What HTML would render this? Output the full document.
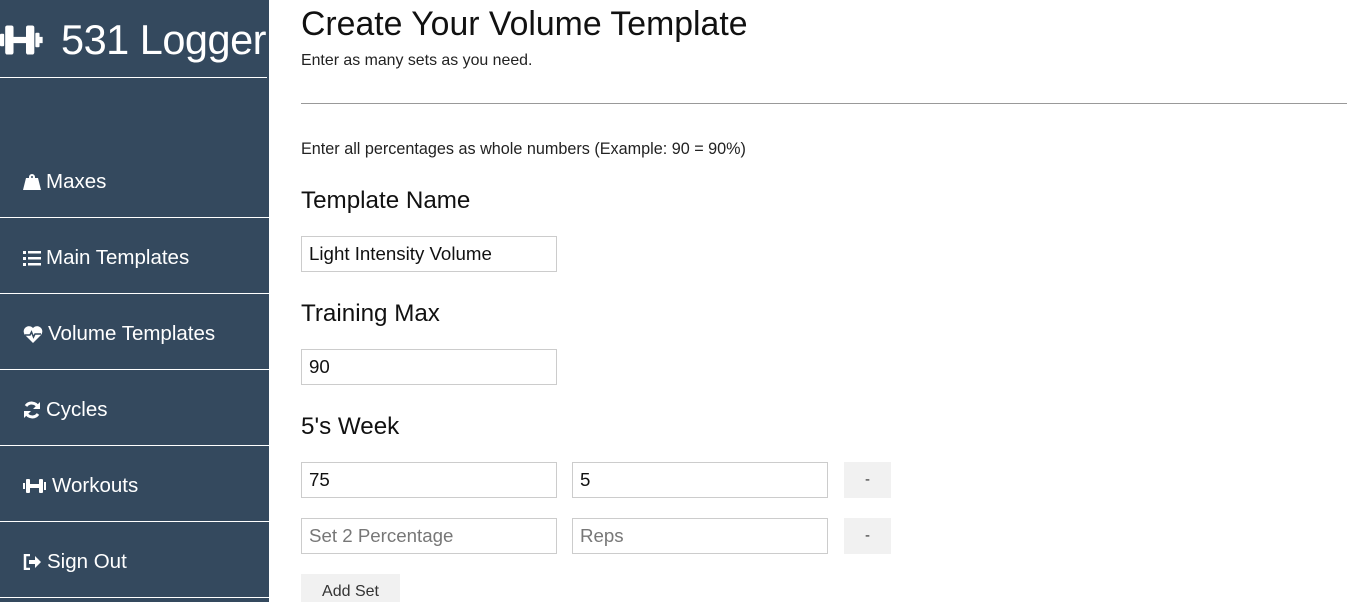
<!DOCTYPE html>
<html><head><style>
*{box-sizing:border-box;margin:0;padding:0}
body{width:1347px;height:602px;overflow:hidden;background:#fff;font-family:"Liberation Sans",sans-serif;position:relative}
.sb{position:absolute;left:0;top:0;width:269px;height:602px;background:#34495e;color:#fff}
.logo{position:absolute;left:0;top:16px;font-size:41.5px;white-space:nowrap;letter-spacing:-0.5px;display:flex;align-items:center}
.hr{position:absolute;left:0;height:1px;background:#fff;width:269px}
.nav{position:absolute;left:23px;font-size:20.5px;display:flex;align-items:center;gap:5px}
.abs{position:absolute}
.inp{position:absolute;height:36px;border:1px solid #ccc;font-size:18.7px;padding:0 7px;line-height:34px;color:#111}
.ph{color:#777}
.btn{position:absolute;background:#f1f1f1;font-size:15px;color:#333;text-align:center}
h2{position:absolute;font-weight:normal;font-size:24.2px;color:#111;left:301px}
</style></head><body>
<div class="sb">
 <div class="logo"><svg width="52" height="40" viewBox="0 0 50 38"><rect x="0" y="13" width="4" height="12" rx="1" fill="#fff"/><rect x="5" y="5" width="8" height="28" rx="2" fill="#fff"/><rect x="13" y="16" width="12" height="6" fill="#fff"/><rect x="25" y="5" width="8" height="28" rx="2" fill="#fff"/><rect x="34" y="12" width="4" height="14" rx="1" fill="#fff"/><rect x="38" y="16" width="3" height="6" fill="#fff"/></svg><span style="margin-left:9px">531 Logger</span></div>
 <div class="hr" style="top:77px;width:267px"></div>
 <div class="nav" style="top:170px"><svg width="18" height="18" viewBox="0 0 18 18"><path d="M9 1a3 3 0 0 1 3 3v1h3l3 12H0L3 5h3V4a3 3 0 0 1 3-3zm0 2a1 1 0 1 0 0 2 1 1 0 0 0 0-2z" fill="#fff"/></svg>Maxes</div>
 <div class="hr" style="top:217px"></div>
 <div class="nav" style="top:246px"><svg width="18" height="16" viewBox="0 0 18 16"><g fill="#fff"><rect x="0" y="1" width="3" height="3"/><rect x="0" y="7" width="3" height="3"/><rect x="0" y="13" width="3" height="3"/><rect x="5" y="1" width="13" height="2.5"/><rect x="5" y="7" width="13" height="2.5"/><rect x="5" y="13" width="13" height="2.5"/></g></svg>Main Templates</div>
 <div class="hr" style="top:293px"></div>
 <div class="nav" style="top:322px"><svg width="20" height="17" viewBox="0 0 20 17"><path d="M10 17L2 9A5 5 0 0 1 10 2a5 5 0 0 1 8 7z" fill="#fff"/><path d="M2 9h5l1.5-3 2 5 1.5-3h6" stroke="#34495e" stroke-width="1.5" fill="none"/></svg>Volume Templates</div>
 <div class="hr" style="top:369px"></div>
 <div class="nav" style="top:398px"><svg width="18" height="18" viewBox="0 0 18 18"><path d="M15 6A7 7 0 0 0 3 5M3 12a7 7 0 0 0 12 1" stroke="#fff" stroke-width="3" fill="none"/><path d="M17 1v7h-7zM1 17v-7h7z" fill="#fff"/></svg>Cycles</div>
 <div class="hr" style="top:445px"></div>
 <div class="nav" style="top:474px"><svg width="24" height="18" viewBox="0 0 24 18"><g fill="#fff"><rect x="0" y="6" width="2" height="6"/><rect x="3" y="2" width="4" height="14" rx="1"/><rect x="7" y="7" width="9" height="4"/><rect x="16" y="2" width="4" height="14" rx="1"/><rect x="21" y="5" width="2" height="8"/></g></svg>Workouts</div>
 <div class="hr" style="top:521px"></div>
 <div class="nav" style="top:550px"><svg width="19" height="16" viewBox="0 0 19 16"><path d="M7 1H2v14h5" stroke="#fff" stroke-width="2.5" fill="none"/><path d="M6 6h6V2l6 6-6 6v-4H6z" fill="#fff"/></svg>Sign Out</div>
 <div class="hr" style="top:597px"></div>
</div>
<div class="abs" style="left:301px;top:5px;font-size:33.8px;color:#111">Create Your Volume Template</div>
<div class="abs" style="left:301px;top:52px;font-size:15.9px;color:#222">Enter as many sets as you need.</div>
<div class="abs" style="left:301px;top:103px;width:1046px;height:1px;background:#999"></div>
<div class="abs" style="left:301px;top:140px;font-size:16.2px;color:#222">Enter all percentages as whole numbers (Example: 90 = 90%)</div>
<h2 style="top:187px">Template Name</h2>
<div class="inp" style="left:301px;top:236px;width:256px">Light Intensity Volume</div>
<h2 style="top:300px">Training Max</h2>
<div class="inp" style="left:301px;top:349px;width:256px">90</div>
<h2 style="top:413px">5's Week</h2>
<div class="inp" style="left:301px;top:462px;width:256px">75</div>
<div class="inp" style="left:572px;top:462px;width:256px">5</div>
<div class="btn" style="left:844px;top:462px;width:47px;height:36px;line-height:36px">-</div>
<div class="inp ph" style="left:301px;top:518px;width:256px">Set 2 Percentage</div>
<div class="inp ph" style="left:572px;top:518px;width:256px">Reps</div>
<div class="btn" style="left:844px;top:518px;width:47px;height:36px;line-height:36px">-</div>
<div class="btn" style="left:301px;top:574px;width:99px;height:28px;line-height:36px;font-size:16px">Add Set</div>
</body></html>
